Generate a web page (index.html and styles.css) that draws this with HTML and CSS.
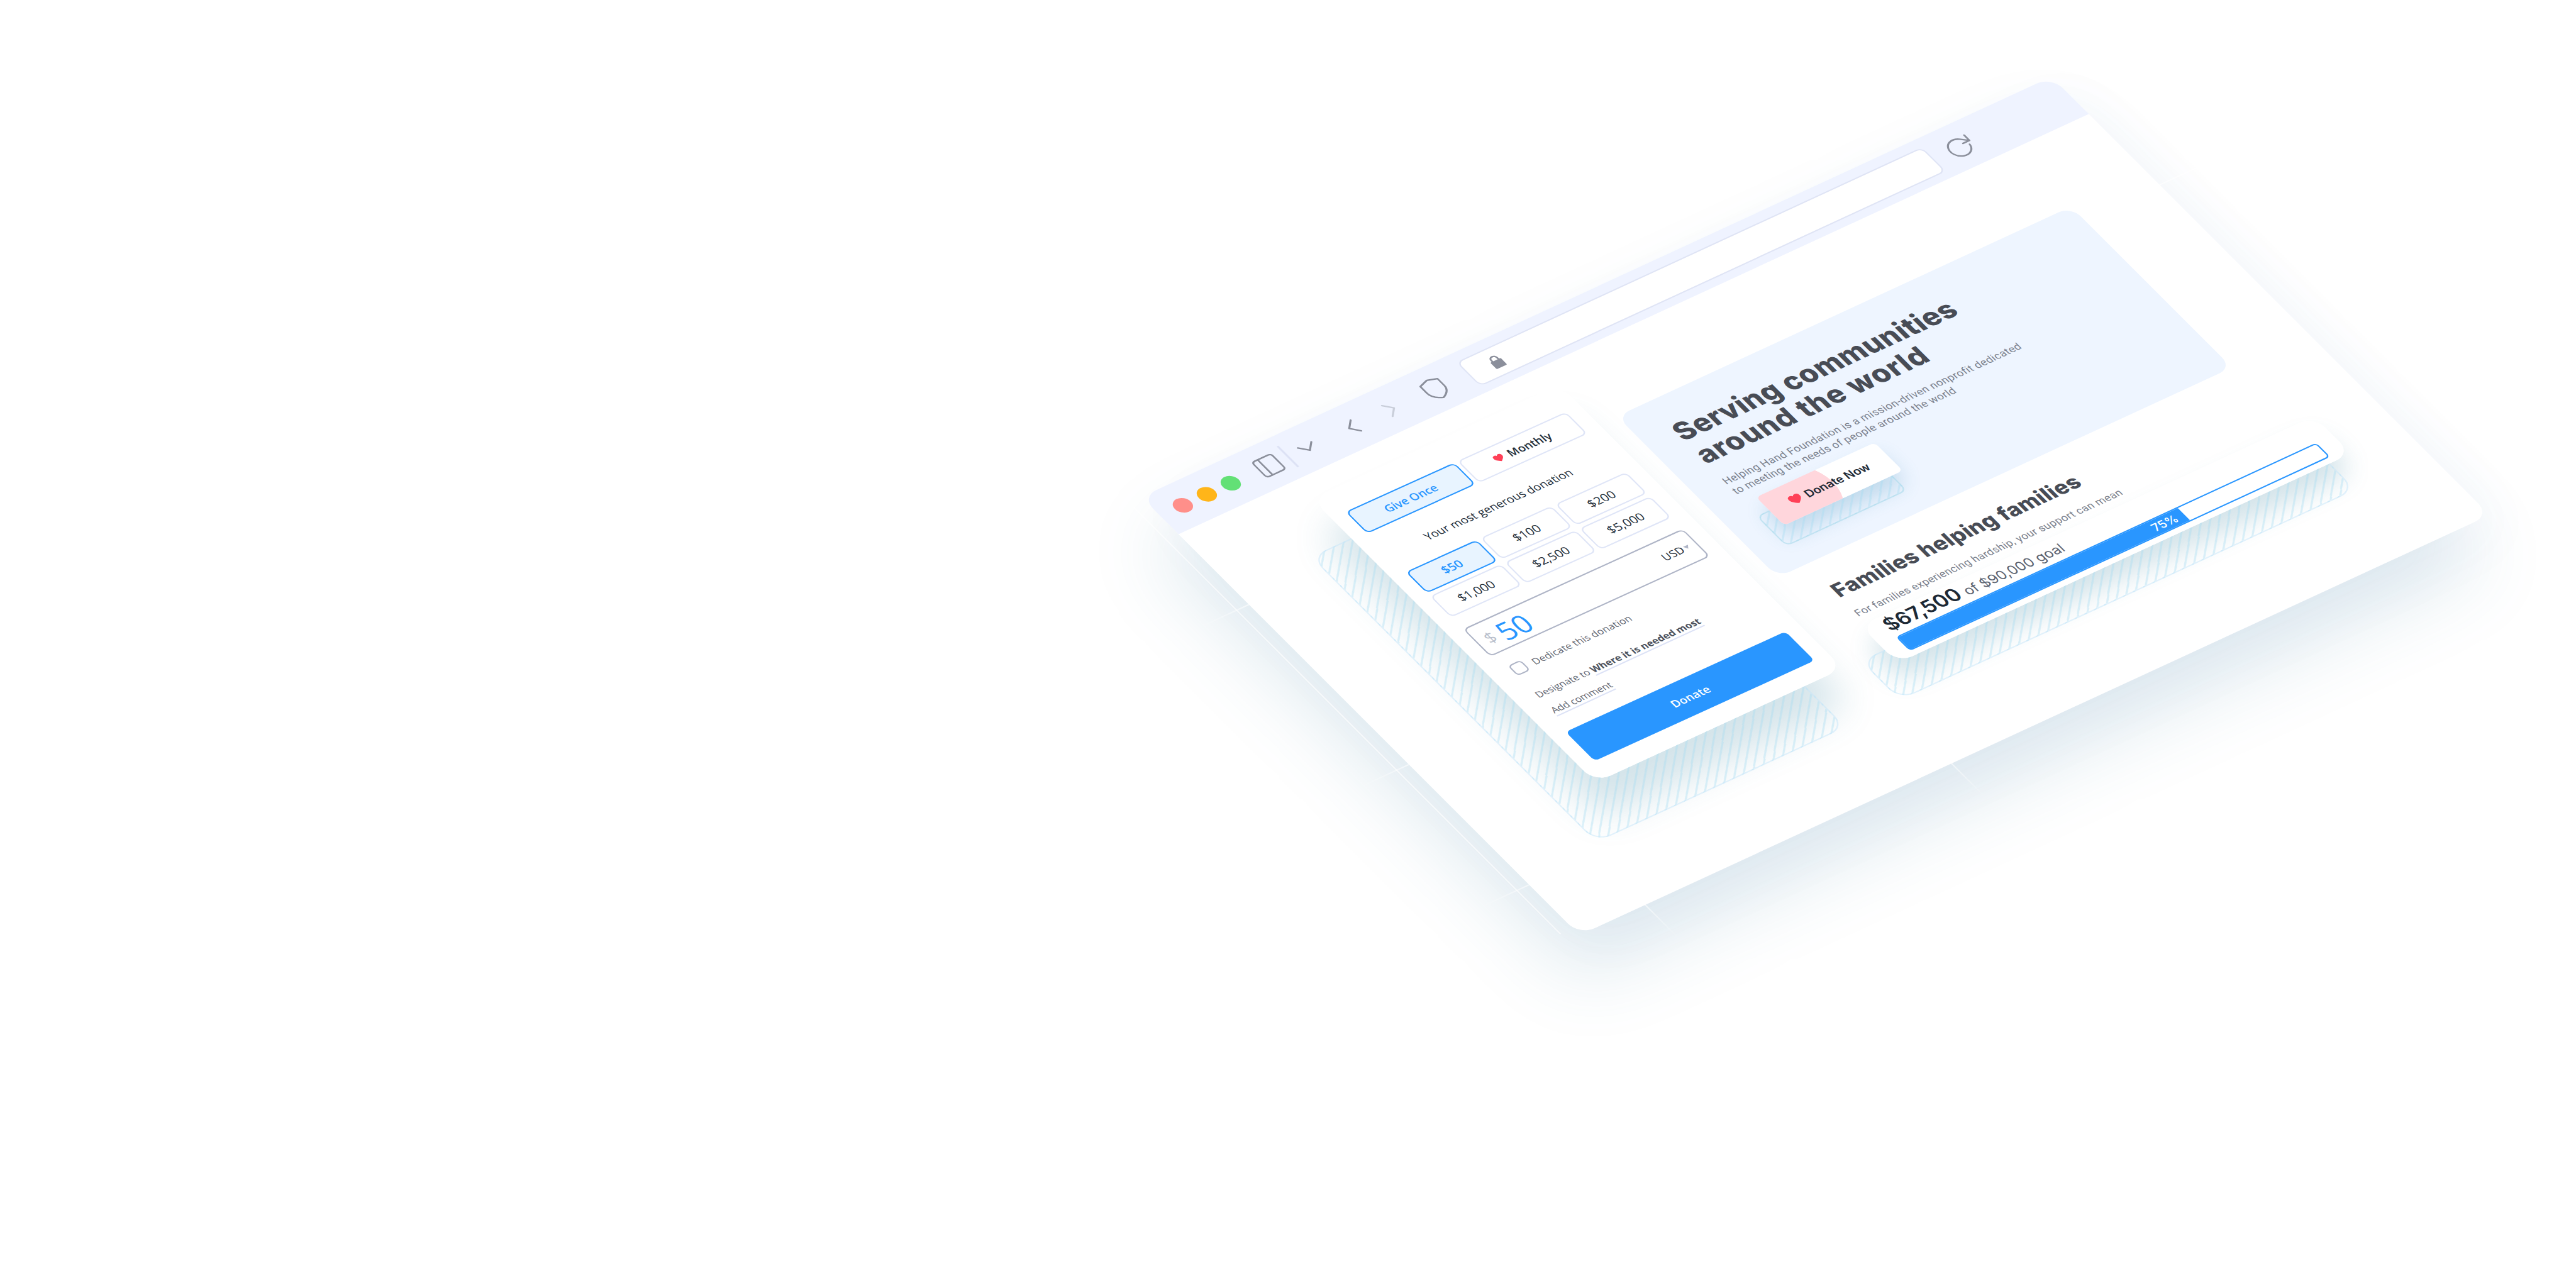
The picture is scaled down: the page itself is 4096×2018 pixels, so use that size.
FILE: index.html
```html
<!DOCTYPE html>
<html lang="en">
<head>
<meta charset="utf-8">
<title>Helping Hand Foundation</title>
<link rel="stylesheet" href="styles.css">
</head>
<body>
<main class="window">
  <i class="guide guide-left"></i>
  <i class="guide guide-west west-1"></i>
  <i class="guide guide-west west-2"></i>
  <i class="guide guide-west west-3"></i>
  <i class="guide guide-east"></i>
  <i class="guide guide-south south-1"></i>
  <i class="guide guide-south south-2"></i>
  <header class="toolbar">
    <div class="lights"><i class="light red"></i><i class="light yellow"></i><i class="light green"></i></div>
    <svg class="icon sidebar" width="34" height="34" viewBox="0 0 34 34"><rect x="1.5" y="1.5" width="31" height="31" rx="4.5"/><path d="M11 1.5v31"/></svg>
    <i class="divider"></i>
    <svg class="icon down" width="26" height="15" viewBox="0 0 26 15"><path d="M2 2l11 11L24 2"/></svg>
    <svg class="icon back" width="15" height="26" viewBox="0 0 15 26"><path d="M13 2L2 13l11 11"/></svg>
    <svg class="icon forward" width="15" height="26" viewBox="0 0 15 26"><path d="M2 2l11 11L2 24"/></svg>
    <svg class="icon shield" width="32" height="38" viewBox="0 0 32 38"><path d="M16 1.5l14 4.7v14C30 28 24 33 16 36.500 8 33 2 28 2 20.200v-14z"/></svg>
    <div class="address">
      <svg class="lock" width="18" height="23" viewBox="0 0 18 23"><path class="shackle" d="M4.200 10V6.500a4.800 4.800 0 0 1 9.600 0V10"/><rect x="0.500" y="9" width="17" height="13.500" rx="1.500"/></svg>
    </div>
    <svg class="icon reload" width="40" height="40" viewBox="0 0 40 40"><path d="M32.500 22A15 15 0 1 1 27 8.500L36.500 16.500M36.500 5.500v11H26"/></svg>
  </header>

  <div class="page">
    <section class="lift lift-form">
      <form class="face donation">
        <div class="tabs">
          <div class="choice selected">Give Once</div>
          <div class="choice strong">
            <svg class="heart" width="14" height="13" viewBox="0 0 14 13"><path d="M7 12.600C2.500 9.500 0 7 0 4.100A3.800 3.800 0 0 1 7 2 3.800 3.800 0 0 1 14 4.100C14 7 11.500 9.500 7 12.600z"/></svg>Monthly
          </div>
        </div>
        <p class="caption">Your most generous donation</p>
        <div class="amounts">
          <div class="choice selected">$50</div>
          <div class="choice">$100</div>
          <div class="choice">$200</div>
          <div class="choice">$1,000</div>
          <div class="choice">$2,500</div>
          <div class="choice">$5,000</div>
        </div>
        <div class="amount-field">
          <span class="sign">$</span><span class="value">50</span>
          <span class="currency">USD</span><i class="caret"></i>
        </div>
        <div class="dedicate"><i class="checkbox"></i><span>Dedicate this donation</span></div>
        <p class="line designate">Designate to <b>Where it is needed most</b></p>
        <p class="line comment"><span>Add comment</span></p>
        <div class="submit">Donate</div>
      </form>
    </section>

    <div class="content">
      <section class="hero">
        <h1>Serving communities<br><span class="wide">around the world</span></h1>
        <p class="lead">Helping Hand Foundation is a mission-driven nonprofit dedicated<br>to meeting the needs of people around the world</p>
        <div class="lift lift-button">
          <div class="face cta">
            <svg class="heart" width="18" height="17" viewBox="0 0 14 13"><path d="M7 12.600C2.500 9.500 0 7 0 4.100A3.800 3.800 0 0 1 7 2 3.800 3.800 0 0 1 14 4.100C14 7 11.500 9.500 7 12.600z"/></svg>Donate Now
          </div>
        </div>
      </section>
      <section class="campaign">
        <h2>Families helping families</h2>
        <p class="support">For families experiencing hardship, your support can mean</p>
      </section>
      <section class="lift lift-goal">
        <div class="face goal">
          <p class="raised"><b>$67,500</b><span>of $90,000 goal</span></p>
          <div class="bar"><div class="fill">75%</div></div>
        </div>
      </section>
    </div>
  </div>
</main>
</body>
</html>
```

FILE: styles.css
```css
* { box-sizing: border-box; }
html, body { margin: 0; height: 100%; overflow: hidden; background: #fff; }
body { font-family: "Open Sans", "Liberation Sans", sans-serif; color: #222d38; }
p, h1, h2 { margin: 0; white-space: nowrap; }

/* The browser window, tilted onto an isometric plane */
.window {
  position: relative;
  width: 1483px;
  height: 903.5px;
  border-radius: 24px;
  background: #fff;
  transform-origin: 0 0;
  transform: matrix(0.97594, -0.45059, 0.77099, 0.77099, 1814.7, 790.2);
  box-shadow:
    -50px 68px 108px rgba(60, 125, 160, 0.15),
    6px 34px 80px rgba(60, 110, 180, 0.03);
}

/* Floor guides showing through the window's shade */
.guide { position: absolute; background: #fff; opacity: 0.6; }
.guide-left { left: -21px; top: 10px; width: 1.5px; height: 880px; }
.guide-west { left: -80px; width: 80px; height: 1.5px; background: linear-gradient(to left, #fff, transparent); }
.west-1 { top: 221px; }
.west-2 { top: 551px; }
.west-3 { top: 799px; }
.guide-east { left: 1483px; top: 222px; width: 80px; height: 1.5px; }
.guide-south { top: 903px; width: 1.5px; height: 70px; background: linear-gradient(#fff, transparent); }
.south-1 { left: 106px; }
.south-2 { left: 605px; }

/* Toolbar */
.toolbar {
  display: flex;
  align-items: center;
  height: 77px;
  padding-left: 24px;
  border-radius: 24px 24px 0 0;
  background: #eff3ff;
}
.lights { display: flex; gap: 13px; }
.light { width: 26px; height: 26px; border-radius: 50%; }
.red { background: #ff8f8a; }
.yellow { background: #ffb519; }
.green { background: #63e076; }
.icon { flex: none; fill: none; stroke: #8b8f9b; stroke-width: 2.6; stroke-linecap: round; stroke-linejoin: round; }
.sidebar { margin-left: 32px; }
.divider { width: 2.5px; height: 43px; margin-left: 13px; background: #dde2f5; }
.down { margin-left: 17px; }
.back { margin-left: 53px; }
.forward { margin-left: 47px; stroke: #c9ceda; }
.shield { margin-left: 49px; }
.address {
  display: flex;
  align-items: center;
  width: 759px;
  height: 50px;
  margin: 3px 0 0 37px;
  padding-left: 35px;
  border: 2.5px solid #dfe4f5;
  border-radius: 10px;
  background: #fff;
}
.lock { fill: #8b8f9b; }
.shackle { fill: none; stroke: #8b8f9b; stroke-width: 2.6; }
.reload { margin: 3px 0 0 24px; }

.page { display: flex; align-items: flex-start; gap: 29px; padding: 37px 0 0 188px; }

/* Raised panels: blurred shade, hatched footprint, then the face */
.lift { position: relative; isolation: isolate; }
.lift::before {
  content: "";
  position: absolute;
  z-index: -1;
  width: 100%;
  height: 100%;
  border: 2.5px solid rgba(197, 229, 250, 0.5);
  border-radius: inherit;
  background: repeating-linear-gradient(135deg, rgba(165, 220, 242, 0.38) 0 2.6px, transparent 2.6px 11.2px);
}
.face { height: 100%; border-radius: inherit; background: #fff; }
.lift-form {
  width: 403px;
  height: 585px;
  border-radius: 24px;
  box-shadow: -30px 54px 54px rgba(60, 130, 160, 0.22);
}
.lift-form::before { left: -66px; top: 80.5px; }
.lift-button { width: 193px; height: 58px; margin: 12px 0 0 19px; border-radius: 7px; box-shadow: -8px 20px 28px rgba(60, 140, 180, 0.24); }
.lift-button::before { left: -21px; top: 27px; border-color: rgba(170, 218, 235, 0.6); border-radius: 10px; }
.lift-goal { width: 739px; height: 77px; margin: 9.500px 0 0 38px; border-radius: 24px; box-shadow: -16px 28px 36px rgba(60, 130, 160, 0.22); }
.lift-goal::before { left: -39px; top: 49.500px; }

/* Donation form */
.donation { padding: 39.500px 23px 31px; }
.tabs, .caption, .amounts { transform: skewY(0.42deg); transform-origin: left; }
.amount-field, .submit { transform: skewY(0.25deg); transform-origin: left; }
.tabs { display: grid; grid-template-columns: 1fr 1fr; gap: 5px; height: 44.500px; }
.choice {
  display: flex;
  align-items: center;
  justify-content: center;
  border: 2px solid #dfe5f7;
  border-radius: 8px;
  font-size: 17px;
}
.selected { border-color: #2996ff; background: #e8f4ff; color: #2996ff; font-weight: 600; }
.strong { font-weight: 600; }
.heart { fill: #ff4057; }
.choice .heart { margin-right: 8px; }
.caption { margin-top: 32px; font-size: 17px; line-height: 24px; text-align: center; }
.amounts { display: grid; grid-template-columns: repeat(3, 1fr); grid-auto-rows: 44px; gap: 6px; margin-top: 24px; }
.amounts .choice { font-size: 18px; }
.amount-field {
  display: flex;
  align-items: center;
  height: 57px;
  margin-top: 24px;
  padding: 0 10px 0 12px;
  border: 2px solid #aeb4c6;
  border-radius: 8px;
}
.sign { color: #b9bfcc; font-size: 25px; }
.value { margin: 2px 0 0 7px; color: #2996ff; font-size: 42px; line-height: 50px; }
.currency { margin-left: auto; font-size: 16.500px; }
.caret { width: 0; height: 0; margin-left: 2px; border: 4px solid transparent; border-top: 6px solid #aeb4c6; border-bottom: 0; }
.dedicate { display: flex; align-items: center; gap: 11px; height: 20px; margin: 24.500px 0 0 9px; color: #5f6570; font-size: 14.800px; letter-spacing: 0.15px; white-space: nowrap; }
.checkbox { width: 21px; height: 21px; border: 2px solid #aeb4c6; border-radius: 6px; }
.line { margin-left: 8px; color: #5f6570; font-size: 14.600px; line-height: 20px; }
.designate { margin-top: 29.500px; }
.comment { margin-top: 12px; }
.line b { color: #4b515c; border-bottom: 2px solid #dce2f6; }
.line span { border-bottom: 2px solid #dce2f6; }
.submit {
  display: flex;
  align-items: center;
  justify-content: center;
  height: 60px;
  margin-top: 29px;
  border-radius: 7px;
  background: #2996ff;
  color: #fff;
  font-size: 17px;
  font-weight: 600;
}

/* Charity site */
.content { width: 780px; padding-top: 82px; }
.hero { width: 739.500px; height: 331.500px; padding: 40px 0 0 46px; border-radius: 20px; background: #eef5ff; }
h1, h2 { color: #484c55; font-family: Inter, "Liberation Sans", sans-serif; font-weight: 800; }
h1 { font-size: 42px; line-height: 47px; letter-spacing: 0.450px; }
.wide { letter-spacing: 1px; }
h2 { font-size: 32px; line-height: 40px; letter-spacing: 0.300px; }
.lead, .support { color: #7c828e; font: 16px/20px Roboto, "Liberation Sans", sans-serif; }
.lead { margin-top: 18.500px; letter-spacing: 0.350px; }
.cta {
  display: flex;
  align-items: center;
  padding-left: 33px;
  background: radial-gradient(circle at 39px 29px, #ffd6dc 63px, #fff 63.800px);
  color: #1d2935;
  font: 600 17.400px Inter, "Liberation Sans", sans-serif;
  white-space: nowrap;
}
.cta .heart { margin-right: 7px; }
.campaign { padding: 38px 0 0 46px; }
.support { margin-top: 15px; letter-spacing: 0.300px; }
.goal { padding: 0 27px 0 27px; font-family: Inter, "Liberation Sans", sans-serif; }
.raised { display: flex; align-items: baseline; gap: 7px; line-height: 34px; }
.raised b { color: #1d2935; font-size: 30px; font-weight: 600; }
.raised span { color: #5c6370; font-size: 21px; }
.bar { height: 29px; margin-top: 1px; border: 2.500px solid #2996ff; border-radius: 6px; background: #fff; }
.fill {
  display: flex;
  align-items: center;
  justify-content: flex-end;
  width: 67%;
  height: 100%;
  padding-right: 12px;
  background: #2996ff;
  color: #fff;
  font-size: 18px;
  font-weight: 500;
}
```
